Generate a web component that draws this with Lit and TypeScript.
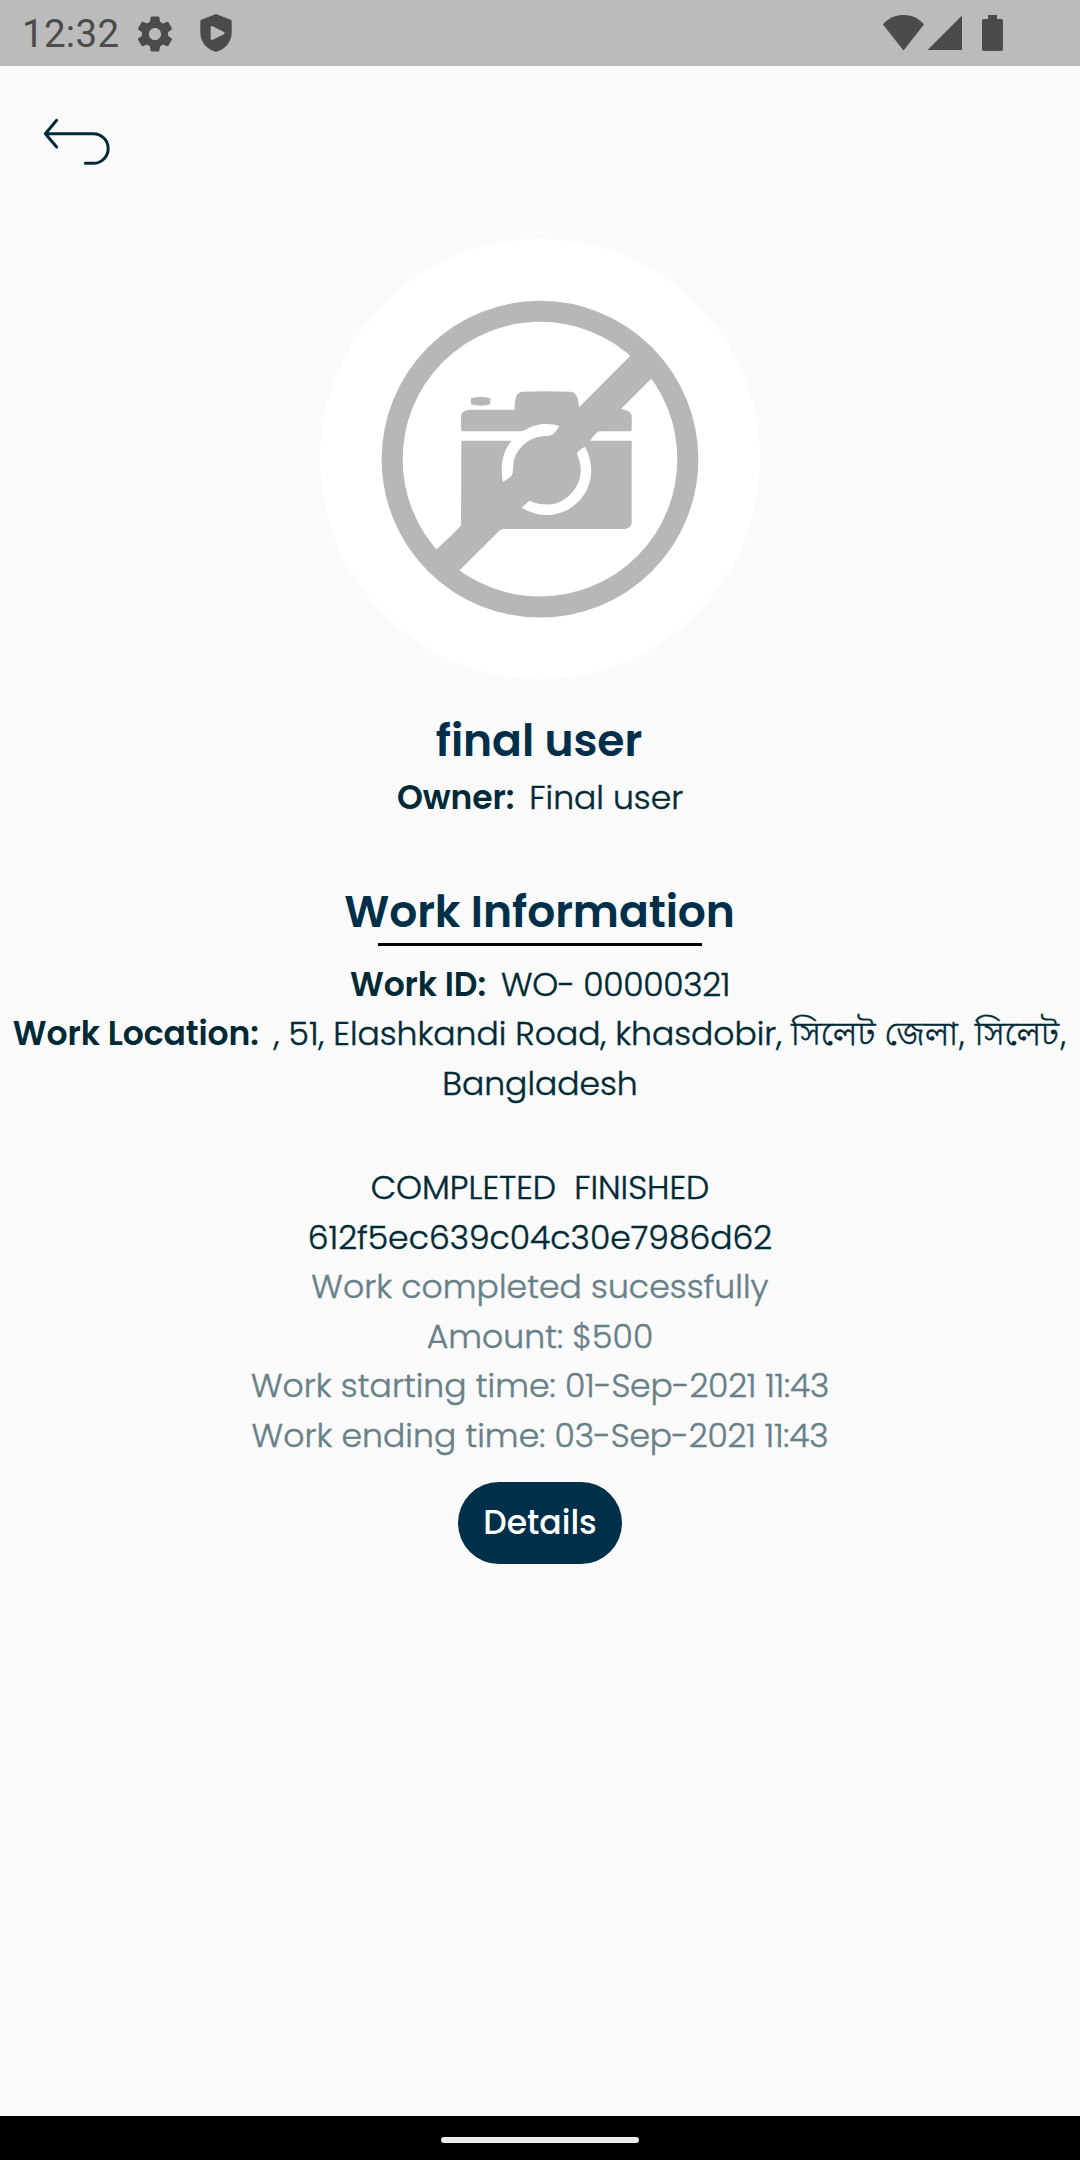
import { LitElement, html, css } from "lit";
import { customElement } from "lit/decorators.js";

const gear =
  "M19.43 12.98c.04-.32.07-.64.07-.98s-.03-.66-.07-.98l2.11-1.65c.19-.15.24-.42.12-.64l-2-3.46c-.12-.22-.39-.3-.61-.22l-2.49 1c-.52-.4-1.08-.73-1.69-.98l-.38-2.65C14.46 2.18 14.25 2 14 2h-4c-.25 0-.46.18-.49.42l-.38 2.65c-.61.25-1.17.59-1.69.98l-2.49-1c-.23-.09-.49 0-.61.22l-2 3.46c-.13.22-.07.49.12.64l2.11 1.65c-.04.32-.07.65-.07.98s.03.66.07.98l-2.11 1.65c-.19.15-.24.42-.12.64l2 3.46c.12.22.39.3.61.22l2.49-1c.52.4 1.08.73 1.69.98l.38 2.65c.03.24.24.42.49.42h4c.25 0 .46-.18.49-.42l.38-2.65c.61-.25 1.17-.59 1.69-.98l2.49 1c.23.09.49 0 .61-.22l2-3.46c.12-.22.07-.49-.12-.64zM12 15.5c-1.93 0-3.5-1.57-3.5-3.5s1.57-3.5 3.5-3.5 3.5 1.57 3.5 3.5-1.57 3.5-3.5 3.5z";

@customElement("status-bar")
export class StatusBar extends LitElement {
  static styles = css`
    :host {
      display: flex;
      align-items: center;
      height: 66px;
      padding: 0 77px 0 22px;
      box-sizing: border-box;
      background: #bbbbbb;
      color: #4b4b4b;
      fill: currentColor;
    }
    .clock {
      width: 112px;
      font: 400 38.5px/66px Roboto, sans-serif;
      letter-spacing: 0.3px;
      white-space: nowrap;
      padding-top: 2px;
    }
    .spacer {
      flex: 1;
    }
    .gear {
      margin: 1px 24px 0 0;
    }
    .battery {
      margin-left: 19px;
    }
    svg {
      display: block;
    }
  `;

  render() {
    return html`
      <div class="clock">12:32</div>
      <svg class="gear" width="42" height="42" viewBox="0 0 24 24"><path d=${gear} /></svg>
      <svg width="32" height="38" viewBox="0 0 96 114">
        <path
          fill-rule="evenodd"
          d="M48 0L92 17Q95 18 95 22V56C95 84 75 106 48 114C21 106 1 84 1 56V22Q1 18 4 17ZM32 41V73Q32 80 38 77L72 61Q76 58 72 54L38 37Q32 34 32 41Z"
        />
      </svg>
      <div class="spacer"></div>
      <svg width="41" height="36" viewBox="0 0 41 36">
        <path d="M20.5 35.5L0 9.5C10-3.2 31-3.2 41 9.5Z" />
      </svg>
      <svg width="39" height="36" viewBox="0 0 39 36"><path d="M38 0.5V35H3.5Z" /></svg>
      <svg class="battery" width="21" height="36" viewBox="0 0 21 36">
        <path d="M6 0H15V4H19Q21 4 21 6V34Q21 36 19 36H2Q0 36 0 34V6Q0 4 2 4H6Z" />
      </svg>
    `;
  }
}

@customElement("photo-placeholder")
export class PhotoPlaceholder extends LitElement {
  static styles = css`
    :host {
      display: block;
      width: 440px;
      height: 440px;
    }
    svg {
      display: block;
      width: 100%;
      height: 100%;
    }
  `;

  render() {
    return html`
      <svg viewBox="30 27 1320 1320" fill="#b7b7b7">
        <circle cx="690" cy="687" r="660" fill="#ffffff" />
        <circle cx="690" cy="687.5" r="443.5" fill="none" stroke="#b7b7b7" stroke-width="63" />
        <path d="M483 505Q512 497 541 505V523Q512 531 483 523Z" />
        <path
          d="M960 378L807 532C805 500 798 486 780 485Q710 482 638 485C620 486 614 500 614 539H480C468 539 455 546 454 554Q452 580 454 604H630C648 604 662 582 708 582Q730 582 748 588C738 604 730 616 718 617C700 619 688 617 668 626C636 640 611 672 610 704C609 724 610 734 598 743L579 756C570 712 576 668 604 632H454L453 886C440 903 410 930 380 958L350 1000L400 1045L449 1021L562 908Q572 897 580 897H944C956 896 964 888 965 880V632H841C850 620 858 605 872 604Q920 603 964 604Q967 570 964 553C960 543 945 539 933 537L1023 447L1040 400L1000 360ZM825 650C854 704 850 768 806 814C760 862 690 868 635 833L658 812C706 832 748 826 780 794C812 762 820 722 805 682Q801 672 801 668Q812 655 825 650Z"
          fill-rule="evenodd"
        />
      </svg>
    `;
  }
}

@customElement("app-root")
export class AppRoot extends LitElement {
  static styles = css`
    :host {
      display: flex;
      flex-direction: column;
      width: 1080px;
      height: 2160px;
      background: #fafafa;
      color: #012a36;
      font: 300 33px/49.5px Poppins, Inter, "Noto Sans Bengali", "Noto Sans", sans-serif;
      overflow: hidden;
    }
    .back {
      display: block;
      margin: 52px 0 73px 43px;
      width: 68px;
      height: 48px;
    }
    main {
      flex: 1;
      display: flex;
      flex-direction: column;
      align-items: center;
      text-align: center;
    }
    h1,
    h2 {
      margin: 0;
      font-size: 44px;
      line-height: 65px;
      font-weight: 600;
      letter-spacing: -0.07px;
      color: #003049;
    }
    h1 {
      margin-top: 29px;
      padding-right: 2px;
    }
    h2 {
      margin-top: 56.5px;
      padding-right: 1px;
    }
    .row {
      white-space: pre-wrap;
      -webkit-text-stroke: 0.45px currentColor;
    }
    b {
      margin-right: -3px;
      font-weight: 600;
      letter-spacing: -0.1px;
      -webkit-text-stroke: 0;
    }
    .order {
      letter-spacing: -0.35px;
    }
    .bn {
      font-family: "Noto Sans Bengali", "Noto Sans", sans-serif;
      font-size: 34.5px;
      font-weight: 340;
      line-height: 1;
      -webkit-text-stroke: 0.4px currentColor;
    }
    .rule {
      width: 324px;
      height: 3px;
      margin: -1px 0 13.7px;
      background: #000000;
    }
    .status {
      margin-top: 55.2px;
    }
    .muted {
      color: #688088;
      letter-spacing: 0.07px;
    }
    .time {
      letter-spacing: -0.2px;
    }
    button {
      margin: 21.6px 0 0;
      width: 164px;
      height: 82px;
      padding: 0;
      border: 0;
      border-radius: 41px;
      background: #003049;
      color: #ffffff;
      font: inherit;
      font-weight: 500;
    }
    .nav {
      display: flex;
      align-items: center;
      justify-content: center;
      height: 44px;
      padding-top: 4px;
      box-sizing: border-box;
      background: #000000;
    }
    .handle {
      width: 198px;
      height: 6px;
      border-radius: 3px;
      background: #ececec;
    }
  `;

  render() {
    return html`
      <status-bar></status-bar>
      <svg class="back" viewBox="130 354 204 144" fill="none" stroke="#012a36" stroke-width="9" stroke-linecap="round" stroke-linejoin="round">
        <path d="M171 361L137 401L171 441M137 401H281A44.5 44.5 0 0 1 281 490H257" />
      </svg>
      <main>
        <photo-placeholder></photo-placeholder>
        <h1>final user</h1>
        <div class="row"><b>Owner:</b>${"  "}Final user</div>
        <h2>Work Information</h2>
        <div class="rule"></div>
        <div class="row"><b>Work ID:</b>${"  "}<span class="order">WO- 00000321</span></div>
        <div class="row"><b>Work Location:</b>${"  "}, 51, Elashkandi Road, khasdobir, <span class="bn">সিলেট জেলা, সিলেট,</span> Bangladesh</div>
        <div class="status">
          <div class="row">COMPLETED${"  "}FINISHED</div>
          <div class="row">612f5ec639c04c30e7986d62</div>
          <div class="row muted">Work completed sucessfully</div>
          <div class="row muted">Amount: $500</div>
          <div class="row muted">Work starting time: <span class="time">01-Sep-2021 11:43</span></div>
          <div class="row muted">Work ending time: <span class="time">03-Sep-2021 11:43</span></div>
        </div>
        <button>Details</button>
      </main>
      <div class="nav"><div class="handle"></div></div>
    `;
  }
}
